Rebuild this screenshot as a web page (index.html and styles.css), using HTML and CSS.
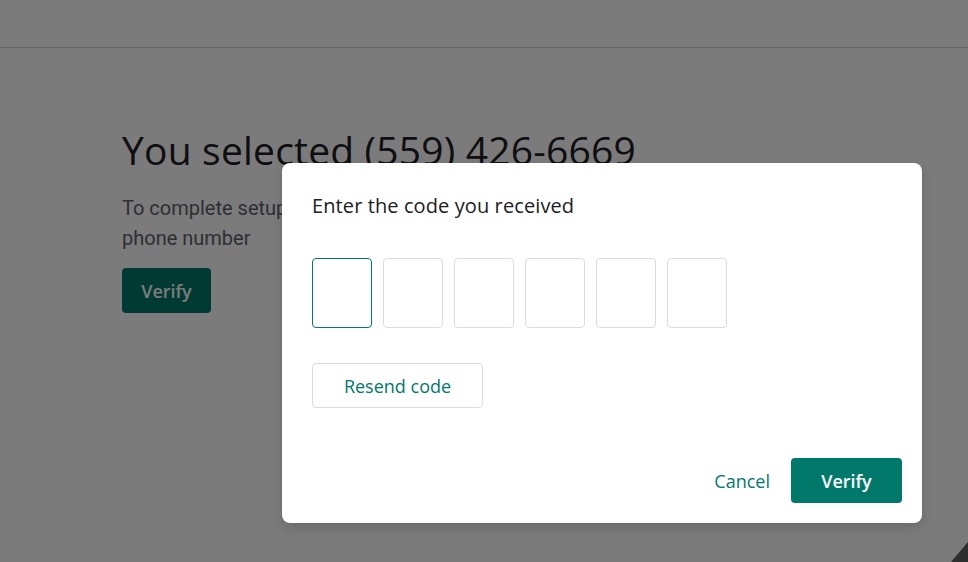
FILE: index.html
```html
<!DOCTYPE html>
<html>
<head>
<meta charset="utf-8">
<link rel="stylesheet" href="styles.css">
</head>
<body>
<div class="page">
  <header class="topbar"></header>
  <main class="content">
    <h1 class="headline">You selected (559) 426-6669</h1>
    <p class="lead">To complete setup, verify your<br>phone number</p>
    <button class="btn-primary">Verify</button>
  </main>
</div>
<div class="scrim"></div>
<div class="dialog">
  <h2 class="dialog-title">Enter the code you received</h2>
  <div class="code-row">
    <div class="code-box focused"></div>
    <div class="code-box"></div>
    <div class="code-box"></div>
    <div class="code-box"></div>
    <div class="code-box"></div>
    <div class="code-box"></div>
  </div>
  <button class="btn-outline">Resend code</button>
  <div class="actions">
    <button class="btn-text">Cancel</button>
    <button class="btn-primary dialog-verify">Verify</button>
  </div>
</div>
<div class="corner"></div>
</body>
</html>
```

FILE: styles.css
```css
* { box-sizing: border-box; }
html, body { margin: 0; padding: 0; }
body {
  width: 968px;
  height: 562px;
  overflow: hidden;
  background: #fff;
  font-family: "Open Sans", "Roboto", sans-serif;
  position: relative;
}
.page { display: flex; flex-direction: column; }
.topbar {
  height: 48px;
  border-bottom: 1px solid #d2d2d2;
}
.content {
  padding: 78px 0 0 122px;
  display: flex;
  flex-direction: column;
  align-items: flex-start;
}
.headline {
  margin: 0;
  font-family: "Open Sans", sans-serif;
  font-weight: 400;
  font-size: 39px;
  line-height: 48px;
  color: #202124;
  letter-spacing: 0.2px;
}
.lead {
  margin: 19px 0 0;
  font-family: "Roboto", sans-serif;
  font-size: 20px;
  line-height: 30px;
  color: #5f6368;
}
button {
  font-family: "Open Sans", sans-serif;
  border: none;
  cursor: pointer;
}
.btn-primary {
  margin-top: 15px;
  width: 89px;
  height: 45px;
  background: #01796a;
  color: #fff;
  font-size: 18px;
  font-weight: 600;
  border-radius: 4px;
  padding: 0;
}
.scrim {
  position: absolute;
  inset: 0;
  background: rgba(0, 0, 0, 0.518);
}
.dialog {
  position: absolute;
  left: 282px;
  top: 163px;
  width: 640px;
  height: 360px;
  background: #fff;
  border-radius: 8px;
  box-shadow: 0 4px 12px rgba(0,0,0,0.15);
  padding: 28px 20px 20px 30px;
  display: flex;
  flex-direction: column;
  align-items: flex-start;
}
.dialog-title {
  margin: 0;
  font-size: 20px;
  line-height: 30px;
  font-weight: 400;
  color: #202124;
  letter-spacing: 0.1px;
}
.code-row {
  margin-top: 37px;
  display: flex;
  gap: 11px;
}
.code-box {
  width: 60px;
  height: 70px;
  border: 1px solid #dadce0;
  border-radius: 4px;
}
.code-box.focused { border-color: #01796a; }
.btn-outline {
  margin-top: 35px;
  width: 171px;
  height: 45px;
  background: #fff;
  border: 1px solid #dadce0;
  border-radius: 4px;
  color: #01796a;
  font-size: 18px;
  font-weight: 500;
  padding: 0;
}
.actions {
  margin-top: auto;
  align-self: stretch;
  display: flex;
  justify-content: flex-end;
  align-items: center;
  gap: 8px;
}
.btn-text {
  height: 45px;
  padding: 0 13px;
  background: transparent;
  color: #01796a;
  font-size: 18px;
  font-weight: 500;
}
.dialog-verify {
  margin-top: 0;
  width: 111px;
}
.corner {
  position: absolute;
  right: 0;
  bottom: 0;
  width: 0;
  height: 0;
  border-style: solid;
  border-width: 0 0 20px 17px;
  border-color: transparent transparent #2e2e2e transparent;
}
```
